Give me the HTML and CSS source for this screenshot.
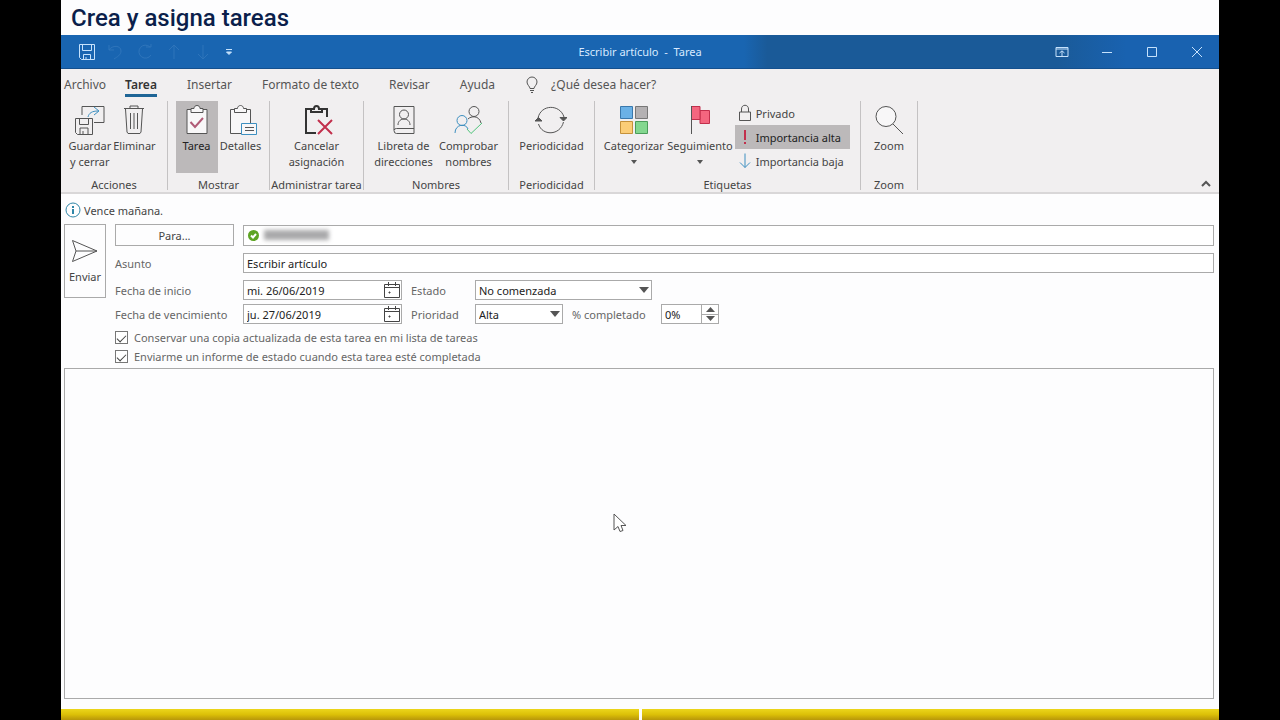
FILE: index.html
```
<!DOCTYPE html>
<html lang="es">
<head>
    <meta charset="UTF-8">
    <meta name="viewport" content="width=device-width, initial-scale=1.0">
    <title>Escribir artículo - Tarea</title>
    <link rel="stylesheet" href="styles.css">
</head>
<body>
    <div class="slide">
        <h1 class="slide-title">Crea y asigna tareas</h1>

        <header class="titlebar">
            <div class="quick-access">
                <button type="button" aria-label="Guardar">
                    <svg width="18" height="18" viewBox="0 0 18 18"><path d="M1.500 1.500h15v15h-13l-2-2zM4.500 1.500v6h9v-6M5.500 16.500v-5h7v5M8 14v2"/></svg>
                </button>
                <button type="button" class="faded" aria-label="Deshacer">
                    <svg width="18" height="18" viewBox="0 0 18 18"><path d="M2 2v5h5M2 7c3-5 12-5 12 1 0 4-4 6-7 8"/></svg>
                </button>
                <button type="button" class="faded" aria-label="Rehacer">
                    <svg width="18" height="18" viewBox="0 0 18 18"><path d="M14 4a6.500 6.500 0 1 0 1 8M10 4h5v-3"/></svg>
                </button>
                <button type="button" class="faded" aria-label="Anterior">
                    <svg width="18" height="18" viewBox="0 0 18 18"><path d="M9 16V2M4 7l5-5 5 5"/></svg>
                </button>
                <button type="button" class="faded" aria-label="Siguiente">
                    <svg width="18" height="18" viewBox="0 0 18 18"><path d="M9 2v14M4 11l5 5 5-5"/></svg>
                </button>
                <button type="button" class="customize" aria-label="Personalizar">
                    <svg width="8" height="8" viewBox="0 0 8 8"><path d="M1 1.500h6"/><path class="solid" d="M1.500 4h5L4 6.500z"/></svg>
                </button>
            </div>
            <div class="window-title">Escribir artículo&nbsp; - &nbsp;Tarea</div>
            <div class="window-controls">
                <button type="button" aria-label="Opciones de la cinta">
                    <svg width="14" height="12" viewBox="0 0 14 12"><path d="M1 1.500h12v9H1zM1 3h12M7 10V5M4.500 7L7 4.800 9.500 7"/></svg>
                </button>
                <button type="button" aria-label="Minimizar">
                    <svg width="12" height="12" viewBox="0 0 12 12"><path d="M1 6.500h10"/></svg>
                </button>
                <button type="button" aria-label="Maximizar">
                    <svg width="12" height="12" viewBox="0 0 12 12"><path d="M1.500 1.500h9v9h-9z"/></svg>
                </button>
                <button type="button" aria-label="Cerrar">
                    <svg width="12" height="12" viewBox="0 0 12 12"><path d="M1 1l10 10M11 1L1 11"/></svg>
                </button>
            </div>
        </header>

        <nav class="tabs">
            <a href="#" class="tab file">Archivo</a>
            <a href="#" class="tab active">Tarea</a>
            <a href="#" class="tab">Insertar</a>
            <a href="#" class="tab">Formato de texto</a>
            <a href="#" class="tab">Revisar</a>
            <a href="#" class="tab">Ayuda</a>
            <a href="#" class="tab tell-me">
                <svg width="14" height="18" viewBox="0 0 14 18"><path d="M5 12.500c0-2-3-3.500-3-6.500a5 5 0 0 1 10 0c0 3-3 4.500-3 6.500zM5 14.500h4M6 16.500h2"/></svg>
                ¿Qué desea hacer?
            </a>
        </nav>

        <div class="ribbon">
            <section class="group first">
                <div class="tools">
                    <button type="button" class="tool">
                        <svg width="32" height="32" viewBox="0 0 32 32">
                            <path d="M8 11V2.500h22v16H20"/>
                            <path class="blue" d="M14 13c1-4 4-6 10-6M20 3l5 4-5 4"/>
                            <path d="M1.500 14.500h17v16h-15l-2-2zM5.500 14.500v6h9v-6M6 30v-6h8v6M9 27v3"/>
                        </svg>
                        <span>Guardar<br>y cerrar</span>
                    </button>
                    <button type="button" class="tool">
                        <svg width="32" height="32" viewBox="0 0 32 32"><path d="M6 4.500h20M12 5V2h8v3M7.500 5l1.500 23 1 1.500h12l1-1.500L24.500 5M12.500 9v16M16 9v16M19.500 9v16"/></svg>
                        <span>Eliminar</span>
                    </button>
                </div>
                <h2>Acciones</h2>
            </section>

            <section class="group">
                <div class="tools">
                    <button type="button" class="tool pressed">
                        <svg width="32" height="32" viewBox="0 0 32 32">
                            <path class="paper" d="M6 5.500h20v24H6z"/>
                            <path class="paper" d="M10 8.500v-4h3c0-4 6-4 6 0h3v4z"/>
                            <path class="mauve" d="M9.500 18l4.500 5 8-9"/>
                        </svg>
                        <span>Tarea</span>
                    </button>
                    <button type="button" class="tool">
                        <svg width="32" height="32" viewBox="0 0 32 32">
                            <path class="paper" d="M5.500 5.500h20v24h-20z"/>
                            <path class="paper" d="M9.500 8.500v-4h3c0-4 6-4 6 0h3v4z"/>
                            <path class="blue paper" d="M16.500 19.500h15v11h-15z"/>
                            <path d="M20 23.500h9M20 26.500h9"/>
                        </svg>
                        <span>Detalles</span>
                    </button>
                </div>
                <h2>Mostrar</h2>
            </section>

            <section class="group">
                <div class="tools">
                    <button type="button" class="tool">
                        <svg width="32" height="32" viewBox="0 0 32 32">
                            <path class="thick" d="M15 29H5V5h5M20 5h6v8"/>
                            <path class="thick" d="M10 8v-3h3c0-4 5-4 5 0h3v3z"/>
                            <path class="red" d="M17 16l14 14M31 16L17 30"/>
                        </svg>
                        <span>Cancelar<br>asignación</span>
                    </button>
                </div>
                <h2>Administrar tarea</h2>
            </section>

            <section class="group">
                <div class="tools">
                    <button type="button" class="tool wide">
                        <svg width="32" height="32" viewBox="0 0 32 32">
                            <path d="M6 26V2.500h20v27H8.500q-2.500 0-2.500-3 0-2 2.500-2H26"/>
                            <circle cx="16" cy="10.500" r="4.500"/>
                            <path d="M10 21c0-8 12-8 12 0"/>
                        </svg>
                        <span>Libreta de<br>direcciones</span>
                    </button>
                    <button type="button" class="tool wide">
                        <svg width="32" height="32" viewBox="0 0 32 32">
                            <circle cx="21" cy="7.500" r="5"/>
                            <path d="M15 15c3-3 11-4 13 4"/>
                            <circle class="blue" cx="9" cy="16.500" r="5"/>
                            <path class="blue" d="M2 29c0-9 11-10 13-4"/>
                            <path class="green" d="M14 25l4 4.500L29 19"/>
                        </svg>
                        <span>Comprobar<br>nombres</span>
                    </button>
                </div>
                <h2>Nombres</h2>
            </section>

            <section class="group">
                <div class="tools">
                    <button type="button" class="tool">
                        <svg width="32" height="32" viewBox="0 0 32 32">
                            <path d="M3.500 20C7 32 25 32 28.500 18M3 14C6 0 25 0 29 13"/>
                            <path class="head" d="M0 17l3.500-3.500L7 17zM25 13.500l3.500 3.500L32 13.500z"/>
                        </svg>
                        <span>Periodicidad</span>
                    </button>
                </div>
                <h2>Periodicidad</h2>
            </section>

            <section class="group tags">
                <div class="tools">
                    <button type="button" class="tool wide">
                        <svg width="32" height="32" viewBox="0 0 32 32">
                            <path class="cat-blue" d="M2.500 2.500h12v12h-12z"/>
                            <path class="cat-gray" d="M17.500 2.500h12v12h-12z"/>
                            <path class="cat-yellow" d="M2.500 17.500h12v12h-12z"/>
                            <path class="cat-green" d="M17.500 17.500h12v12h-12z"/>
                        </svg>
                        <span>Categorizar</span>
                        <svg class="arrow" width="6" height="4" viewBox="0 0 6 4"><path d="M0 0h6L3 4z"/></svg>
                    </button>
                    <button type="button" class="tool wide">
                        <svg width="32" height="32" viewBox="0 0 32 32">
                            <path class="flag" d="M16 6.500h9.500v13H16z"/>
                            <path class="flag" d="M7.500 2.500H16v13H7.500z"/>
                            <path d="M7.500 2v28"/>
                        </svg>
                        <span>Seguimiento</span>
                        <svg class="arrow" width="6" height="4" viewBox="0 0 6 4"><path d="M0 0h6L3 4z"/></svg>
                    </button>
                    <div class="stack">
                        <button type="button" class="small">
                            <svg width="16" height="18" viewBox="0 0 16 18"><path d="M2.500 8h11v8.500h-11zM4.500 8V5c0-5 7-5 7 0v3"/></svg>
                            Privado
                        </button>
                        <button type="button" class="small pressed">
                            <svg width="16" height="18" viewBox="0 0 16 18"><path class="red" d="M8 2v10M8 14v2"/></svg>
                            Importancia alta
                        </button>
                        <button type="button" class="small">
                            <svg width="16" height="18" viewBox="0 0 16 18"><path class="blue" d="M8 1.500v14M3 10.500l5 5 5-5"/></svg>
                            Importancia baja
                        </button>
                    </div>
                </div>
                <h2>Etiquetas</h2>
            </section>

            <section class="group">
                <div class="tools">
                    <button type="button" class="tool">
                        <svg width="32" height="32" viewBox="0 0 32 32"><circle class="lens" cx="13" cy="12.500" r="10"/><path d="M20 20l10 10"/></svg>
                        <span>Zoom</span>
                    </button>
                </div>
                <h2>Zoom</h2>
            </section>

            <button type="button" class="collapse" aria-label="Contraer la cinta">
                <svg width="10" height="8" viewBox="0 0 10 8"><path d="M1 6l4-4 4 4"/></svg>
            </button>
        </div>

        <main class="task">
            <div class="info">
                <svg width="16" height="16" viewBox="0 0 16 16"><circle cx="8" cy="8" r="7"/><path class="mark" d="M8 4v2M8 7v5"/></svg>
                Vence mañana.
            </div>

            <form class="task-form">
                <button type="button" class="send">
                    <svg width="28" height="24" viewBox="0 0 28 24"><path d="M1.500 1.500L26 12 1.500 22.500 5 12zM5 12h21"/></svg>
                    Enviar
                </button>

                <div class="fields">
                    <button type="button" class="to">Para...</button>
                    <div class="box recipient span">
                        <svg width="11" height="11" viewBox="0 0 11 11"><circle cx="5.500" cy="5.500" r="5.500"/><path d="M3 5.500l2 2 3-3.500"/></svg>
                        <span class="hidden-name"></span>
                    </div>

                    <label for="subject">Asunto</label>
                    <input type="text" id="subject" class="box span" value="Escribir artículo">

                    <label for="start">Fecha de inicio</label>
                    <div class="box date">
                        <input type="text" id="start" value="mi. 26/06/2019">
                        <button type="button" aria-label="Elegir fecha de inicio">
                            <svg width="16" height="17" viewBox="0 0 16 17"><path d="M.500 2.500h15v13H.500zM.500 5.500h15M4.500 0v4M11.500 0v4"/><path class="solid" d="M5 10h1v1H5z"/></svg>
                        </button>
                    </div>
                    <label for="status">Estado</label>
                    <div class="pick">
                        <select id="status" class="box">
                            <option>No comenzada</option>
                            <option>En curso</option>
                            <option>Completada</option>
                        </select>
                        <svg width="10" height="6" viewBox="0 0 10 6"><path d="M0 0h10L5 6z"/></svg>
                    </div>

                    <label for="due">Fecha de vencimiento</label>
                    <div class="box date">
                        <input type="text" id="due" value="ju. 27/06/2019">
                        <button type="button" aria-label="Elegir fecha de vencimiento">
                            <svg width="16" height="17" viewBox="0 0 16 17"><path d="M.500 2.500h15v13H.500zM.500 5.500h15M4.500 0v4M11.500 0v4"/><path class="solid" d="M5 10h1v1H5z"/></svg>
                        </button>
                    </div>
                    <label for="priority">Prioridad</label>
                    <div class="priority-row">
                        <div class="pick short">
                            <select id="priority" class="box">
                                <option>Alta</option>
                                <option>Normal</option>
                                <option>Baja</option>
                            </select>
                            <svg width="10" height="6" viewBox="0 0 10 6"><path d="M0 0h10L5 6z"/></svg>
                        </div>
                        <label for="percent">% completado</label>
                        <div class="box spinner">
                            <input type="text" id="percent" value="0%">
                            <div class="steps">
                                <button type="button" aria-label="Más"><svg width="9" height="5" viewBox="0 0 9 5"><path d="M0 5h9L4.500 0z"/></svg></button>
                                <button type="button" aria-label="Menos"><svg width="9" height="5" viewBox="0 0 9 5"><path d="M0 0h9L4.500 5z"/></svg></button>
                            </div>
                        </div>
                    </div>

                    <div class="checks">
                        <label><input type="checkbox" checked>Conservar una copia actualizada de esta tarea en mi lista de tareas</label>
                        <label><input type="checkbox" checked>Enviarme un informe de estado cuando esta tarea esté completada</label>
                    </div>
                </div>
            </form>

            <div class="notes">
                <textarea aria-label="Notas de la tarea"></textarea>
                <svg class="pointer" width="14" height="20" viewBox="0 0 14 20"><path d="M1 1v16l4-3.500 2 5 3-1-2-5h5z"/></svg>
            </div>
        </main>

        <footer class="progress">
            <span></span>
            <span></span>
        </footer>
    </div>
</body>
</html>
```
FILE: styles.css
```
* {
    box-sizing: border-box;
}

body {
    margin: 0;
    padding: 0 61px;
    background-color: #000;
    color: #444;
    font-family: "Noto Sans", "Open Sans", sans-serif;
    font-size: 11px;
}

button, input, select, textarea {
    font: inherit;
    color: inherit;
}

button {
    padding: 0;
    border: none;
    background: none;
}

svg {
    display: block;
    flex: none;
    fill: none;
    stroke: #555;
}

.slide {
    display: flex;
    flex-direction: column;
    min-height: 100vh;
    background-color: #fdfdfe;
}

.slide-title {
    margin: 0;
    padding: 2px 0 0 10px;
    color: #0b1f4b;
    font-family: Roboto, sans-serif;
    font-size: 24px;
    font-weight: 500;
    line-height: 33px;
}

/* Title bar */
.titlebar {
    display: grid;
    grid-template-columns: 1fr auto 1fr;
    align-items: center;
    height: 34px;
    background: linear-gradient(90deg, #1965b1 59%, #1a5a98 61%, #1a5a98 86%, #1962b0 92%);
    border-bottom: 1px solid #14508e;
    color: #d8eaff;
}

.titlebar svg {
    stroke: #c6e2fc;
}

.titlebar .solid {
    fill: #c6e2fc;
}

.quick-access {
    display: flex;
    gap: 11px;
    padding-left: 17px;
}

.quick-access .faded {
    opacity: 0.12;
}

.quick-access button {
    display: flex;
    align-items: center;
}

.quick-access .customize {
    margin-left: 2px;
}

.window-controls {
    display: flex;
    justify-content: flex-end;
}

.window-controls button {
    display: flex;
    align-items: center;
    justify-content: center;
    width: 45px;
    height: 30px;
}

/* Tabs */
.tabs {
    display: flex;
    align-items: center;
    height: 29px;
    background-color: #f1eff0;
    font-size: 12px;
}

.tab {
    margin: 0 15px;
    padding-top: 5px;
    border-bottom: 3px solid transparent;
    color: #555;
    line-height: 18px;
    text-decoration: none;
}

.tab.file {
    margin: 0 4px 0 3px;
}

.tab.active {
    border-color: #1f6596;
    color: #333;
    font-weight: 600;
}

.tell-me {
    display: flex;
    align-items: center;
    gap: 12px;
}

/* Ribbon */
.ribbon {
    display: grid;
    grid-template-columns: 107px 102px 94px 145px 86px 266px 57px 1fr;
    padding: 3px 0 2px;
    background-color: #f1eff0;
    border-bottom: 2px solid #d9d7d8;
}

.group {
    display: flex;
    flex-direction: column;
    justify-content: space-between;
    height: 89px;
    border-right: 1px solid #c4c2c3;
}

.group h2 {
    margin: 0;
    font-size: 11px;
    font-weight: 400;
    line-height: 10px;
    text-align: center;
    white-space: nowrap;
}

.tools {
    display: flex;
    justify-content: center;
    gap: 2px;
}

.group.first .tools {
    padding-right: 4px;
}

.group.tags .tools {
    padding-right: 3px;
}

.tool {
    display: flex;
    flex-direction: column;
    align-items: center;
    min-width: 42px;
    height: 72px;
    padding-top: 3px;
    font-size: 11px;
    line-height: 16px;
}

.tool span {
    padding-top: 2px;
}

.tool.wide {
    min-width: 63px;
}

.tool .arrow {
    margin-top: 6px;
}

.pressed {
    background-color: #bcb9ba;
    color: #222;
}

.stack {
    display: flex;
    flex-direction: column;
}

.small {
    display: flex;
    align-items: center;
    gap: 3px;
    height: 24px;
    padding: 0 6px 0 2px;
    white-space: nowrap;
}

.ribbon .blue {
    stroke: #3d8fc0;
}

.ribbon .red {
    stroke: #c22f4c;
    stroke-width: 2;
}

.ribbon .green {
    stroke: #4fc47a;
}

.ribbon .mauve {
    stroke: #b05a76;
    stroke-width: 2;
}

.ribbon .thick {
    stroke: #333;
    stroke-width: 2;
}

.ribbon .head {
    fill: #555;
}

.paper, .lens {
    fill: #f8f7f8;
}

.cat-blue {
    fill: #6bb1e6;
    stroke: #3a78ac;
}

.cat-gray {
    fill: #b4b1b3;
    stroke: #777;
}

.cat-yellow {
    fill: #fbcd77;
    stroke: #c5913a;
}

.cat-green {
    fill: #83d78f;
    stroke: #4b9c5a;
}

.flag {
    fill: #f4667f;
    stroke: #c22f4c;
}

.arrow, .pick svg, .steps svg {
    fill: #555;
    stroke: none;
}

.collapse {
    align-self: end;
    justify-self: end;
    padding: 0 8px 2px 0;
}

.collapse svg {
    stroke-width: 2;
}

/* Task form */
.task {
    display: flex;
    flex: 1;
    flex-direction: column;
    padding: 6px 5px 10px 3px;
}

.info {
    display: flex;
    align-items: center;
    gap: 3px;
    height: 20px;
    padding-left: 1px;
}

.info svg {
    stroke: #2f86a8;
}

.info .mark {
    stroke-width: 2;
}

.task-form {
    display: flex;
    align-items: flex-start;
    gap: 9px;
    padding-top: 4px;
}

.send {
    display: flex;
    flex-direction: column;
    align-items: center;
    justify-content: center;
    gap: 6px;
    width: 42px;
    height: 74px;
    border: 1px solid #aaa;
}

.fields {
    display: grid;
    flex: 1;
    grid-template-columns: 119px 159px 55px 1fr;
    column-gap: 9px;
    row-gap: 4px;
    align-items: center;
}

.fields label {
    color: #666;
    white-space: nowrap;
}

.to {
    height: 22px;
    border: 1px solid #aaa;
}

.box {
    height: 20px;
    border: 1px solid #aaa;
    border-radius: 0;
    background-color: #fff;
    color: #222;
}

.span {
    grid-column: 2 / -1;
}

input.box {
    margin: 3px 0;
    padding: 0 3px;
}

.recipient {
    display: flex;
    align-items: center;
    gap: 5px;
    height: 21px;
    padding-left: 4px;
}

.recipient circle {
    fill: #5da423;
    stroke: none;
}

.recipient path {
    stroke: #fff;
    stroke-width: 2;
}

.hidden-name {
    width: 65px;
    height: 10px;
    background-color: #a9a9ab;
    filter: blur(2px);
}

.date, .spinner {
    display: flex;
    justify-content: space-between;
}

.date {
    padding-right: 1px;
}

.date input, .spinner input {
    width: 100%;
    min-width: 0;
    padding: 0 3px;
    border: none;
    background: none;
}

.date .solid {
    fill: #444;
}

.date svg {
    stroke: #444;
}

.pick {
    display: grid;
    align-items: center;
    width: 177px;
}

.pick.short {
    width: 88px;
}

.pick select, .pick svg {
    grid-area: 1 / 1;
}

.pick select {
    width: 100%;
    padding: 0 3px;
    appearance: none;
}

.pick svg {
    justify-self: end;
    margin-right: 3px;
    pointer-events: none;
}

.priority-row {
    display: flex;
    align-items: center;
    gap: 9px;
}

.priority-row label {
    width: 80px;
}

.spinner {
    width: 58px;
}

.steps {
    display: flex;
    flex: none;
    flex-direction: column;
    width: 17px;
    border-left: 1px solid #aaa;
}

.steps button {
    display: flex;
    flex: 1;
    align-items: center;
    justify-content: center;
}

.steps button + button {
    border-top: 1px solid #aaa;
}

.checks {
    display: flex;
    flex-direction: column;
    grid-column: 1 / -1;
}

.checks label {
    display: flex;
    align-items: center;
    gap: 6px;
    height: 19px;
}

.checks input {
    display: grid;
    place-items: center;
    width: 13px;
    height: 13px;
    margin: 0;
    border: 1px solid #777;
    background-color: #fff;
    appearance: none;
}

.checks input:checked::before {
    content: "";
    width: 8px;
    height: 4px;
    border: solid #444;
    border-width: 0 0 1px 1px;
    transform: rotate(-45deg);
}

.notes {
    position: relative;
    display: flex;
    flex: 1;
    padding-top: 2px;
}

.notes textarea {
    flex: 1;
    border: 1px solid #aaa;
    background-color: #fdfdfe;
    resize: none;
}

.pointer {
    position: absolute;
    top: 147px;
    left: 549px;
    fill: #fff;
}

/* Yellow strip under the window */
.progress {
    display: flex;
    gap: 3px;
    height: 11px;
}

.progress span {
    flex: 1;
    background: linear-gradient(#ecd61c, #dcc008 50%, #b8960a);
}
```
